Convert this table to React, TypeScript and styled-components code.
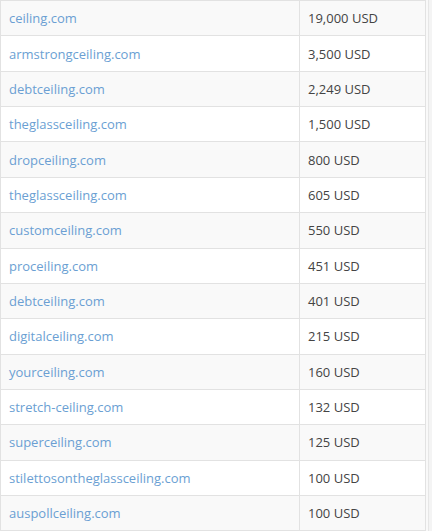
import React from "react";
import styled, { createGlobalStyle } from "styled-components";

const Global = createGlobalStyle`
  html, body { margin: 0; padding: 0; background: #ffffff; }
  body { font-family: "Open Sans", "Liberation Sans", sans-serif; }
`;

const Frame = styled.div`
  width: 432px;
  height: 531px;
  overflow: hidden;
  display: flex;
  background: #f4f4f4;
`;

const Table = styled.div`
  width: 426px;
  flex: none;
  border-top: 1px solid #e2e2e2;
  border-left: 1px solid #e2e2e2;
  border-right: 1px solid #e2e2e2;
  box-sizing: border-box;
  background: #fff;
`;

const Gutter = styled.div`
  width: 2px;
  border-right: 1px solid #e6e6e6;
  background: #f9f9f9;
`;

const Row = styled.div<{ $striped: boolean }>`
  display: grid;
  grid-template-columns: 299px 1fr;
  height: 35.36px;
  box-sizing: border-box;
  border-bottom: 1px solid #e2e2e2;
  background: ${(p) => (p.$striped ? "#f9f9f9" : "#ffffff")};
`;

const Cell = styled.div<{ $first?: boolean }>`
  display: flex;
  align-items: center;
  padding: 0 8px;
  font-size: 13px;
  white-space: nowrap;
  border-right: ${(p) => (p.$first ? "1px solid #e2e2e2" : "none")};
`;

const Domain = styled.a`
  color: #6b9fd3;
  text-decoration: none;
`;

const Price = styled.span`
  color: #444;
`;

const rows: [string, string][] = [
  ["ceiling.com", "19,000 USD"],
  ["armstrongceiling.com", "3,500 USD"],
  ["debtceiling.com", "2,249 USD"],
  ["theglassceiling.com", "1,500 USD"],
  ["dropceiling.com", "800 USD"],
  ["theglassceiling.com", "605 USD"],
  ["customceiling.com", "550 USD"],
  ["proceiling.com", "451 USD"],
  ["debtceiling.com", "401 USD"],
  ["digitalceiling.com", "215 USD"],
  ["yourceiling.com", "160 USD"],
  ["stretch-ceiling.com", "132 USD"],
  ["superceiling.com", "125 USD"],
  ["stilettosontheglassceiling.com", "100 USD"],
  ["auspollceiling.com", "100 USD"],
];

export default function App() {
  return (
    <>
      <Global />
      <Frame>
        <Table>
          {rows.map(([d, p], i) => (
            <Row key={i} $striped={i % 2 === 0}>
              <Cell $first>
                <Domain href="#">{d}</Domain>
              </Cell>
              <Cell>
                <Price>{p}</Price>
              </Cell>
            </Row>
          ))}
        </Table>
        <Gutter />
      </Frame>
    </>
  );
}
